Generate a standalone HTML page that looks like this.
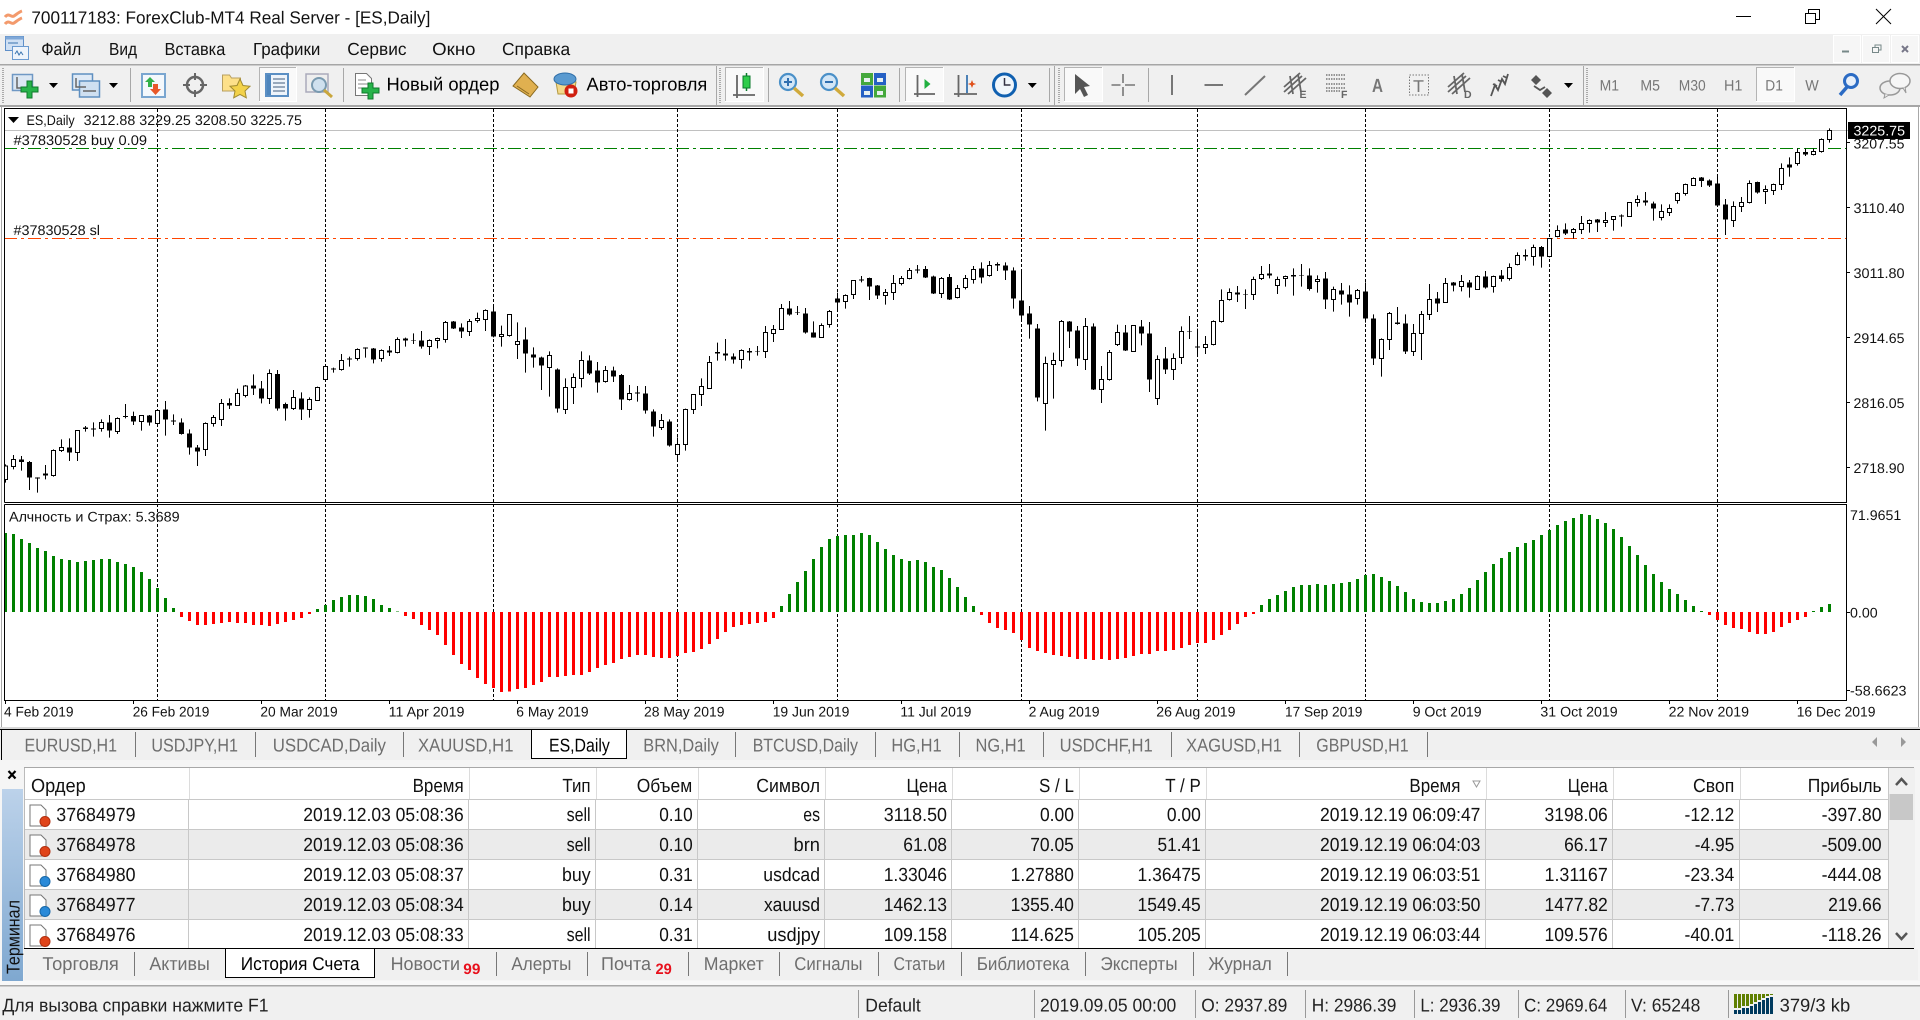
<!DOCTYPE html>
<html><head><meta charset="utf-8"><title>700117183: ForexClub-MT4 Real Server - [ES,Daily]</title>
<style>
html,body{margin:0;padding:0;background:#f0f0f0;width:1920px;height:1020px;overflow:hidden}
svg{display:block;shape-rendering:crispEdges}
text{font-family:"Liberation Sans","Noto Sans CJK SC",sans-serif;fill:#111;text-rendering:geometricPrecision}
.c{font-size:14px}
.r{font-size:19px}
.g{font-size:18.5px;fill:#6e6e6e}
.k{font-size:18.5px;fill:#000}
.m{font-size:17.5px}
.tf{font-size:15px;fill:#777}
.i{shape-rendering:auto}
.w{fill:none;stroke:#000;stroke-width:1}
.bk{fill:none;stroke:#000;stroke-width:5}
.wh{fill:#fff;stroke:#000;stroke-width:1;vector-effect:non-scaling-stroke}
.hg{fill:none;stroke:#008000;stroke-width:3}
.hr{fill:none;stroke:#f00;stroke-width:3}
</style></head><body>
<svg xmlns="http://www.w3.org/2000/svg" width="1920" height="1020" viewBox="0 0 1920 1020">
<defs><linearGradient id="bl" x1="0" y1="0" x2="0" y2="1"><stop offset="0" stop-color="#bcd2ea"/><stop offset="1" stop-color="#7fa8d0"/></linearGradient></defs>
<rect width="1920" height="1020" fill="#f0f0f0"/>
<!-- title bar -->
<rect width="1920" height="34" fill="#fff"/>
<g class="i" fill="none" stroke="#f39a6c" stroke-width="3"><path d="M5 17c4-5 6 1 9-1s5-4 8-5"/><path d="M5 24c4-5 6 1 9-1s5-4 8-5"/></g>
<text x="31.4" y="23.3" class="m" textLength="399" lengthAdjust="spacingAndGlyphs">700117183: ForexClub-MT4 Real Server - [ES,Daily]</text>
<path d="M1736 16.5h15" stroke="#000" fill="none"/>
<g fill="none" stroke="#000"><rect x="1805.5" y="13.5" width="10" height="10"/><path d="M1808.5 13.5v-4h11v10h-4"/></g>
<path class="i" d="M1876 9l15 15M1891 9l-15 15" stroke="#000" fill="none"/>
<!-- menu -->
<g class="i"><rect x="5.5" y="36.5" width="18" height="14" fill="#cfe0f4" stroke="#5f8fc8"/><rect x="5.5" y="36.5" width="18" height="3" fill="#7fa8d8"/><rect x="12.5" y="46.5" width="16" height="13" fill="#eef4fb" stroke="#6a9ad0"/><path d="M15 54l2-3 2 4 2-3 2 3" stroke="#3a75b0" fill="none"/><path d="M8 43h10" stroke="#3a75b0"/></g>
<text x="41.2" y="55" class="m" textLength="40" lengthAdjust="spacingAndGlyphs">Файл</text>
<text x="109" y="55" class="m" textLength="28" lengthAdjust="spacingAndGlyphs">Вид</text>
<text x="164.5" y="55" class="m" textLength="60.8" lengthAdjust="spacingAndGlyphs">Вставка</text>
<text x="253" y="55" class="m" textLength="67.4" lengthAdjust="spacingAndGlyphs">Графики</text>
<text x="347.3" y="55" class="m" textLength="59.2" lengthAdjust="spacingAndGlyphs">Сервис</text>
<text x="432.2" y="55" class="m" textLength="43.3" lengthAdjust="spacingAndGlyphs">Окно</text>
<text x="502" y="55" class="m" textLength="68.2" lengthAdjust="spacingAndGlyphs">Справка</text>
<g fill="#f6f6f6" stroke="#fff"><rect x="1833.5" y="35.5" width="27" height="27"/><rect x="1862.5" y="35.5" width="27" height="27"/><rect x="1891.5" y="35.5" width="27" height="27"/></g>
<path d="M1842 51.5h7" stroke="#788" stroke-width="2" fill="none"/>
<g fill="none" stroke="#788"><rect x="1872.5" y="47.5" width="6" height="5"/><path d="M1875 47v-2h6v5h-2"/></g>
<path class="i" d="M1902 46l6 6M1908 46l-6 6" stroke="#778" stroke-width="2" fill="none"/>
<rect y="64" width="1920" height="1.5" fill="#a6a6a6"/>
<!-- toolbar -->
<rect y="105" width="1920" height="2" fill="#a6a6a6"/>
<g fill="none" stroke="#aaa" stroke-width="2" stroke-dasharray="1 1"><path d="M3 68V103M720 68V103M1059 68V103M1587 68V103"/></g>
<path d="M130.5 68V102M343.5 68V102M768.5 68V102M899.5 68V102M1049.5 68V102M1148.5 68V102M716.5 66V105M1054.5 66V105M1583.5 66V105" stroke="#a8a8a8" fill="none"/>
<g fill="#f9f9f9" stroke="#fff"><rect x="259.5" y="67.5" width="37" height="34"/><rect x="725.5" y="67.5" width="38" height="34"/><rect x="905.5" y="67.5" width="38" height="34"/><rect x="1064.5" y="67.5" width="38" height="34"/><rect x="1756.5" y="67.5" width="38" height="34"/></g>
<path d="M259.5 101V67.5H296M725.5 101V67.5H763M905.5 101V67.5H943M1064.5 101V67.5H1102M1756.5 101V67.5H1794" stroke="#b4b4b4" fill="none"/>
<g class="i">
<!-- new chart -->
<rect x="12.5" y="74.5" width="20" height="16" fill="#dbe7f3" stroke="#6f98c4" stroke-width="1.5"/><path d="M17 77v11h11" stroke="#666" stroke-width="1.5" fill="none"/>
<path d="M27 81h5v6h6v5h-6v6h-5v-6h-6v-5h6z" fill="#27b34a" stroke="#0f7a2c"/>
<path d="M49 83h9l-4.5 5zM109 83h9l-4.5 5zM1027.8 83h9l-4.5 5zM1564 83h9l-4.5 5z" fill="#000"/>
<!-- profiles -->
<rect x="72.5" y="74" width="20" height="16" fill="#dfeaf6" stroke="#5f8fc0" stroke-width="1.5"/><rect x="79.5" y="81" width="20" height="16" fill="#cfe0f1" stroke="#5f8fc0" stroke-width="1.5"/><path d="M76 78v9h10M83 91h13" stroke="#666" stroke-width="1.5" fill="none"/>
<!-- market watch -->
<rect x="142" y="74" width="23" height="23" fill="#f4f8fc" stroke="#7aa6d0" stroke-width="2"/><path d="M145 82l5-5 5 5h-3v5h-4v-5z" fill="#33b04a"/><path d="M150 89h3v-5h5v5h3l-5.5 6z" fill="#e8582a"/>
<!-- crosshair -->
<circle cx="195" cy="85" r="8" fill="none" stroke="#666" stroke-width="2.5"/><path d="M195 73v7M195 90v7M183 85h7M200 85h7" stroke="#666" stroke-width="2" fill="none"/>
<!-- favourites -->
<path d="M222.5 75h7l2 3h9v13h-18z" fill="#fde08a" stroke="#b9a060"/><path d="M240 79l3 6.5 7 .8-5 4.7 1.3 6.8-6.300-3.400-6.300 3.400 1.300-6.800-5-4.700 7-.8z" fill="#f3d24a" stroke="#a08a30"/>
<!-- navigator -->
<rect x="266" y="74" width="22" height="22" fill="#eef4fb" stroke="#5b8fc4" stroke-width="2"/><rect x="267" y="75" width="4" height="20" fill="#4f86bd"/><path d="M273 79h12M273 83h12M273 87h12M273 91h12" stroke="#7a8ea8" stroke-width="1.5" fill="none"/>
<!-- data window -->
<rect x="306" y="74" width="22" height="18" fill="#eee" stroke="#aab" stroke-width="1.5"/><circle cx="319" cy="85" r="7" fill="#cfe0ee" stroke="#7a9ab0" stroke-width="2"/><path d="M324 90l8 7" stroke="#c9a63c" stroke-width="3"/>
<!-- new order -->
<path d="M355.5 73.5h11l5 5v17h-16z" fill="#fff" stroke="#777"/><path d="M358 80h8M358 84h10M358 88h5" stroke="#888" fill="none"/><path d="M368 83h5v5h6v5h-6v6h-5v-6h-6v-5h6z" fill="#27b34a" stroke="#0f7a2c"/>
<!-- metaeditor -->
<path d="M524 73l14 14-8 10-17-11z" fill="#e0b050" stroke="#8a6a20"/><path d="M517 86l12 8" stroke="#8a6a20" fill="none"/>
<!-- autotrading -->
<path d="M556 82h20l-2 12h-16z" fill="#f3d98a" stroke="#b59a40"/><ellipse cx="565" cy="79" rx="11" ry="6" fill="#5a9ad0" stroke="#2f6ea8"/><circle cx="571" cy="91" r="6.5" fill="#d02010"/><rect x="568.5" y="88.500" width="5" height="5" fill="#fff"/>
<!-- candles icon -->
<path d="M737 75v23M733 95h22" stroke="#666" stroke-width="1.8" fill="none"/><path d="M746.5 73v18" stroke="#0a7a2c" stroke-width="1.5"/><rect x="743" y="76" width="7" height="12" fill="#2ecc4a" stroke="#0a7a2c"/>
<!-- zoom -->
<circle cx="788" cy="82" r="8" fill="#d3e6f6" stroke="#4a90c8" stroke-width="2.2"/><path d="M784 82h8M788 78v8" stroke="#2f6fb0" stroke-width="2"/><path d="M794 88l9 8" stroke="#d0aa3c" stroke-width="3.5"/>
<circle cx="829" cy="82" r="8" fill="#d3e6f6" stroke="#4a90c8" stroke-width="2.2"/><path d="M825 82h8" stroke="#2f6fb0" stroke-width="2"/><path d="M835 88l9 8" stroke="#d0aa3c" stroke-width="3.5"/>
<!-- tile -->
<rect x="861" y="73" width="12" height="12" fill="#45a83c"/><rect x="874" y="73" width="12" height="12" fill="#2560c4"/><rect x="861" y="85.5" width="12" height="12" fill="#2560c4"/><rect x="874" y="85.5" width="12" height="12" fill="#45a83c"/><path d="M864 78h6v4h-6zM877 78h6v4h-6zM864 91h6v4h-6zM877 91h6v4h-6z" fill="#e8f0f0"/>
<!-- shift -->
<path d="M917.5 75v22M914 94h21" stroke="#666" stroke-width="1.8" fill="none"/><path d="M924.5 79l6 5-6 5z" fill="#22b040"/>
<path d="M958.5 75v22M954 94h23" stroke="#666" stroke-width="1.8" fill="none"/><path d="M967 75v18" stroke="#3a75b0" stroke-width="1.8"/><path d="M972 80l1.2 3 3 1-3 1-1.2 3-1.2-3-3-1 3-1z" fill="#e0501a"/>
<!-- clock -->
<circle cx="1004.5" cy="85" r="11" fill="#f0f6fb" stroke="#1060b0" stroke-width="3"/><path d="M1004.5 78v7h6" stroke="#334" stroke-width="1.5" fill="none"/>
<!-- drawing -->
<path d="M1075 74v20l5-5 4 8 4-2-4-8 6-1z" fill="#555"/>
<path d="M1123 74v9M1123 87v9M1111.5 85h9M1125 85h10" stroke="#777" stroke-width="1.6" fill="none"/>
<path d="M1172 75v20M1204.5 85H1223M1245 95l20-19" stroke="#777" stroke-width="2" fill="none"/>
<path d="M1284 92l18-16M1284 87l16-14M1288 94l18-16M1290 76l3 18M1298 74l3 18" stroke="#666" stroke-width="1.8" fill="none"/>
<path d="M1326 75h20M1326 79h20M1326 84h20M1326 88h20M1326 91h14" stroke="#777" stroke-width="1.6" stroke-dasharray="1.5 1" fill="none"/>
<rect x="1409.5" y="75" width="19" height="20" fill="none" stroke="#777" stroke-dasharray="1.5 1.5"/>
<path d="M1448 92l18-16M1448 87l16-14M1452 94l18-16M1454 76l3 18M1462 74l3 18" stroke="#666" stroke-width="1.8" fill="none"/>
<path d="M1491 96l4-11 3 5 4-11 3 5 3-10M1493 84l4 2M1498 80l4 2M1503 76l4 2" stroke="#555" stroke-width="1.8" fill="none"/>
<path d="M1536 75l5 5-5 5-5-5zM1547 88l5 5-5 5-5-5z" fill="#555"/><path d="M1534 86l6 4 5-3" stroke="#555" stroke-width="1.8" fill="none"/>
<!-- search / chat -->
<circle cx="1851" cy="81" r="6.5" fill="#e8f0fa" stroke="#2b6bc4" stroke-width="3"/><path d="M1847 87l-7 8" stroke="#2b6bc4" stroke-width="3.5"/>
<ellipse cx="1890" cy="88" rx="10" ry="7" fill="#eee" stroke="#999" stroke-width="1.5"/><path d="M1885 94l-1 4 5-3" fill="#eee" stroke="#999"/><ellipse cx="1900" cy="81" rx="10" ry="7.5" fill="#f6f6f6" stroke="#999" stroke-width="1.5"/><path d="M1903 88l3 5-1-6" fill="#f6f6f6" stroke="#999"/>
</g>
<text x="386.5" y="90.7" class="k" textLength="113" lengthAdjust="spacingAndGlyphs">Новый ордер</text>
<text x="586.5" y="90.7" class="k" textLength="120.8" lengthAdjust="spacingAndGlyphs">Авто-торговля</text>
<text x="1299.5" y="98" style="font-size:10.5px;font-weight:bold;fill:#666">E</text>
<text x="1341" y="98" style="font-size:10.5px;font-weight:bold;fill:#666">F</text>
<text x="1464" y="98" style="font-size:10.5px;font-weight:bold;fill:#666">D</text>
<text x="1372" y="92" style="font-size:19px;font-weight:bold;fill:#777" textLength="11" lengthAdjust="spacingAndGlyphs">A</text>
<text x="1413" y="92" style="font-size:17px;fill:#777" textLength="11" lengthAdjust="spacingAndGlyphs">T</text>
<text x="1599.6" y="90.7" class="tf" textLength="19.4" lengthAdjust="spacingAndGlyphs">M1</text>
<text x="1640.4" y="90.7" class="tf" textLength="19.6" lengthAdjust="spacingAndGlyphs">M5</text>
<text x="1678.8" y="90.7" class="tf" textLength="26.9" lengthAdjust="spacingAndGlyphs">M30</text>
<text x="1724" y="90.7" class="tf" textLength="18.4" lengthAdjust="spacingAndGlyphs">H1</text>
<text x="1765.3" y="90.7" class="tf" textLength="17.6" lengthAdjust="spacingAndGlyphs">D1</text>
<text x="1805.3" y="90.7" class="tf" textLength="13.5" lengthAdjust="spacingAndGlyphs">W</text>
<!-- chart area -->
<rect y="107" width="1920" height="620" fill="#fff"/>
<path d="M1.5 107V727M1918.5 107V727" stroke="#a8a8a8" fill="none"/>
<path d="M4 130.5H1848" stroke="#c0c0c0" fill="none"/>
<g fill="none" stroke="#000" stroke-dasharray="3 2"><path d="M157.5 109V700M325.5 109V700M493.5 109V700M677.5 109V700M837.5 109V700M1021.5 109V700M1197.5 109V700M1365.5 109V700M1549.5 109V700M1717.5 109V700"/></g>
<path d="M4 148.5H1847" stroke="#008000" stroke-dasharray="13 4 3 4" fill="none"/>
<path d="M4 238.5H1847" stroke="#ff4500" stroke-dasharray="13 4 3 4" fill="none"/>
<!-- panel A -->
<g transform="translate(0 100) scale(1 .33333)">
<path class="w" d="M5.5 1093V1148M13.5 1065V1108M21.5 1068V1112M29.5 1083V1170M37.5 1132V1178M45.5 1095V1138M53.5 1048V1130M61.5 1018V1056M69.5 1015V1083M77.5 990V1083M85.5 978V995M93.5 967V1010M101.5 958V995M109.5 945V1013M117.5 952V1002M125.5 912V955M133.5 935V975M141.5 945V992M149.5 945V977M157.5 928V975M165.5 903V1007M173.5 943V975M181.5 955V1004M189.5 988V1064M197.5 1035V1098M205.5 967V1068M213.5 945V980M221.5 897V978M229.5 895V927M237.5 866V918M245.5 855V892M253.5 823V885M261.5 843V910M269.5 808V912M277.5 810V932M285.5 908V962M293.5 870V930M301.5 877V960M309.5 892V953M317.5 860V902M325.5 798V840M333.5 803V818M341.5 762V812M349.5 770V800M357.5 745V782M365.5 742V773M373.5 744V790M381.5 748V785M389.5 738V768M397.5 712V760M405.5 713V740M413.5 700V732M421.5 693V746M429.5 718V765M437.5 713V745M445.5 663V728M453.5 663V687M461.5 670V714M469.5 657V708M477.5 638V668M485.5 628V693M493.5 620V712M501.5 677V740M509.5 642V710M517.5 667V777M525.5 682V818M533.5 742V803M541.5 770V870M549.5 754V890M557.5 805V938M565.5 835V942M573.5 820V912M581.5 754V862M589.5 766V825M597.5 786V878M605.5 798V848M613.5 800V846M621.5 822V930M629.5 855V902M637.5 858V905"/>
<path class="bk" d="M21.5 1078V1086M29.5 1086V1133M37.5 1132V1136M45.5 1120V1127M69.5 1042V1058M85.5 983V987M93.5 985V989M109.5 967V992M125.5 948V951M133.5 948V965M149.5 946V968M165.5 928V958M173.5 961V965M181.5 967V1002M189.5 1000V1043M197.5 1042V1055M229.5 909V917M253.5 856V866M261.5 865V895M277.5 822V926M285.5 912V926M301.5 895V929M333.5 805V809M349.5 775V779M365.5 743V746M373.5 745V779M389.5 751V758M405.5 715V722M413.5 720V722M421.5 721V740M453.5 664V686M461.5 683V695M493.5 634V710M525.5 718V761M533.5 763V773M541.5 772V797M557.5 808V926M589.5 781V821M597.5 811V848M613.5 811V829M621.5 825V899M637.5 877V881"/>
<path class="wh" d="M3.5 1098h4V1138h-4zM11.5 1078h4V1100h-4zM51.5 1052h4V1127h-4zM59.5 1042h4V1052h-4zM75.5 992h4V1057h-4zM99.5 968h4V985h-4zM115.5 955h4V995h-4zM139.5 947h4V965h-4zM155.5 932h4V970h-4zM203.5 970h4V1048h-4zM211.5 952h4V970h-4zM219.5 910h4V958h-4zM235.5 880h4V916h-4zM243.5 858h4V887h-4zM267.5 820h4V895h-4zM291.5 892h4V925h-4zM307.5 898h4V928h-4zM315.5 862h4V901h-4zM323.5 800h4V838h-4zM339.5 782h4V808h-4zM355.5 748h4V775h-4zM379.5 752h4V775h-4zM395.5 719h4V757h-4zM427.5 722h4V739h-4zM435.5 716h4V721h-4zM443.5 667h4V718h-4zM467.5 665h4V695h-4zM475.5 656h4V661h-4zM483.5 631h4V658h-4zM499.5 704h4V709h-4zM507.5 644h4V707h-4zM515.5 725h4V733h-4zM547.5 767h4V802h-4zM563.5 862h4V928h-4zM571.5 833h4V862h-4zM579.5 782h4V835h-4zM603.5 811h4V845h-4zM627.5 880h4V899h-4z"/>
</g>
<!-- panel B -->
<g transform="translate(640 240) scale(1 .33333)">
<path class="w" d="M5.5 438V521M13.5 508V590M21.5 522V570M29.5 538V620M37.5 592V660M45.5 506V632M53.5 462V522M61.5 415V498M69.5 348V447M77.5 308V362M85.5 297V362M93.5 340V371M101.5 328V386M109.5 324V362M117.5 318V347M125.5 258V354M133.5 255V306M141.5 192V270M149.5 183V227M157.5 198V225M165.5 204V281M173.5 244V293M181.5 250V293M189.5 210V263M197.5 158V213M205.5 163V206M213.5 120V177M221.5 108V127M229.5 113V180M237.5 135V177M245.5 147V194M253.5 105V180M261.5 108V136M269.5 84V118M277.5 75V100M285.5 78V114M293.5 107V162M301.5 111V174M309.5 102V180M317.5 135V175M325.5 105V148M333.5 78V131M341.5 67V130M349.5 63V110M357.5 67V93M365.5 67V120M373.5 82V206M381.5 91V242M389.5 198V296M397.5 252V484M405.5 350V572M413.5 338V476M421.5 240V380M429.5 243V324M437.5 258V378M445.5 234V390M453.5 250V450M461.5 378V489M469.5 330V422M477.5 254V318M485.5 255V333M493.5 256V335M501.5 240V316M509.5 246V456M517.5 346V495M525.5 321V402M533.5 340V420M541.5 259V372M549.5 228V297M557.5 266V351M565.5 288V342M573.5 241V316M581.5 148V248M589.5 145V182M597.5 138V186M605.5 148V207M613.5 110V180M621.5 78V120M629.5 72V115M637.5 110V162"/>
<path class="bk" d="M5.5 460V512M13.5 514V560M29.5 544V617M77.5 336V341M85.5 340V347M93.5 349V359M109.5 333V338M117.5 334V336M149.5 205V224M157.5 217V219M165.5 220V278M173.5 277V293M197.5 175V188M221.5 118V122M229.5 114V140M237.5 136V167M277.5 88V92M285.5 87V113M293.5 109V161M309.5 111V179M341.5 85V113M357.5 72V77M365.5 76V92M373.5 91V176M381.5 181V227M389.5 220V254M397.5 265V473M429.5 244V275M437.5 271V356M453.5 259V449M485.5 277V332M501.5 259V281M509.5 280V419M525.5 355V389M549.5 273V275M557.5 319V323M597.5 157V164M605.5 162V164M629.5 100V107"/>
<path class="wh" d="M19.5 541h4V563h-4zM35.5 613h4V643h-4zM43.5 508h4V613h-4zM51.5 463h4V508h-4zM59.5 439h4V464h-4zM67.5 367h4V445h-4zM99.5 331h4V358h-4zM123.5 277h4V334h-4zM131.5 268h4V280h-4zM139.5 205h4V268h-4zM179.5 256h4V292h-4zM187.5 214h4V253h-4zM203.5 166h4V184h-4zM211.5 121h4V163h-4zM243.5 157h4V166h-4zM251.5 130h4V157h-4zM259.5 115h4V130h-4zM267.5 91h4V115h-4zM299.5 115h4V160h-4zM315.5 146h4V172h-4zM323.5 115h4V142h-4zM331.5 88h4V118h-4zM347.5 77h4V106h-4zM403.5 371h4V490h-4zM411.5 362h4V373h-4zM419.5 244h4V361h-4zM443.5 259h4V358h-4zM459.5 418h4V448h-4zM467.5 337h4V418h-4zM475.5 278h4V313h-4zM491.5 257h4V334h-4zM515.5 358h4V475h-4zM531.5 356h4V388h-4zM539.5 275h4V352h-4zM563.5 314h4V322h-4zM571.5 244h4V314h-4zM579.5 181h4V245h-4zM587.5 157h4V179h-4zM611.5 118h4V163h-4zM619.5 103h4V116h-4zM635.5 119h4V136h-4z"/>
</g>
<!-- panel C -->
<g transform="translate(1280 100) scale(1 .33333)">
<path class="w" d="M5.5 527V560M13.5 505V587M21.5 492V560M29.5 505V572M37.5 526V578M45.5 516V627M53.5 560V635M61.5 549V614M69.5 556V650M77.5 567V614M85.5 547V668M93.5 643V795M101.5 715V830M109.5 636V750M117.5 621V674M125.5 643V762M133.5 672V768M141.5 633V780M149.5 552V660M157.5 576V636M165.5 534V608M173.5 546V574M181.5 525V574M189.5 540V593M197.5 526V570M205.5 513V566M213.5 527V578M221.5 510V545M229.5 490V542M237.5 457V496M245.5 448V482M253.5 434V497M261.5 438V503M269.5 414V472M277.5 376V412M285.5 370V405M293.5 384V416M301.5 348V402M309.5 358V398M317.5 357V396M325.5 336V381M333.5 348V392M341.5 343V380M349.5 306V350M357.5 286V320M365.5 276V317M373.5 305V362M381.5 313V361M389.5 313V348M397.5 277V311M405.5 251V287M413.5 232V258M421.5 231V261M429.5 238V261M437.5 223V319M445.5 297V405M453.5 304V381M461.5 291V336M469.5 241V310M477.5 245V281M485.5 256V312M493.5 251V285M501.5 190V270M509.5 172V230M517.5 145V197M525.5 145V168M533.5 145V166M541.5 115V158M549.5 85V128"/>
<path class="bk" d="M13.5 525V530M21.5 525V527M29.5 526V567M45.5 535V599M61.5 571V584M69.5 583V608M85.5 574V656M93.5 655V776M117.5 667V672M125.5 670V755M157.5 595V611M173.5 547V557M189.5 547V563M205.5 529V562M221.5 526V537M245.5 465V470M261.5 441V470M285.5 388V401M317.5 358V368M341.5 346V349M365.5 301V307M373.5 310V326M421.5 233V243M429.5 241V257M437.5 250V317M445.5 313V359M477.5 246V278M509.5 193V203M525.5 156V164"/>
<path class="wh" d="M3.5 530h4V536h-4zM35.5 538h4V544h-4zM51.5 568h4V598h-4zM75.5 571h4V595h-4zM99.5 718h4V775h-4zM107.5 640h4V718h-4zM131.5 701h4V755h-4zM139.5 643h4V700h-4zM147.5 598h4V643h-4zM163.5 550h4V607h-4zM179.5 545h4V559h-4zM195.5 529h4V568h-4zM211.5 530h4V559h-4zM227.5 503h4V536h-4zM235.5 467h4V493h-4zM251.5 442h4V470h-4zM267.5 416h4V470h-4zM275.5 391h4V409h-4zM291.5 389h4V397h-4zM299.5 371h4V388h-4zM307.5 362h4V370h-4zM323.5 361h4V368h-4zM331.5 350h4V358h-4zM347.5 308h4V349h-4zM355.5 299h4V307h-4zM387.5 326h4V338h-4zM379.5 335h4V353h-4zM395.5 281h4V301h-4zM403.5 254h4V280h-4zM411.5 235h4V256h-4zM451.5 320h4V361h-4zM459.5 308h4V320h-4zM467.5 251h4V308h-4zM483.5 268h4V274h-4zM491.5 254h4V271h-4zM499.5 205h4V254h-4zM515.5 158h4V190h-4zM531.5 155h4V164h-4zM539.5 118h4V155h-4zM547.5 91h4V118h-4z"/>
</g>
<!-- histograms -->
<g transform="translate(0 500) scale(1 .33333)">
<path class="hg" d="M5.5 336V99M13.5 336V102M21.5 336V117M29.5 336V129M37.5 336V144M45.5 336V153M53.5 336V168M61.5 336V177M69.5 336V180M77.5 336V186M85.5 336V183M93.5 336V180M101.5 336V177M109.5 336V177M117.5 336V186M125.5 336V192M133.5 336V201M141.5 336V216M149.5 336V237M157.5 336V264M165.5 336V294M173.5 336V324M317.5 336V327M325.5 336V315M333.5 336V300M341.5 336V291M349.5 336V285M357.5 336V285M365.5 336V288M373.5 336V297M381.5 336V315M389.5 336V324M397.5 336V334"/>
<path class="hr" d="M181.5 336V351M189.5 336V363M197.5 336V375M205.5 336V375M213.5 336V372M221.5 336V369M229.5 336V366M237.5 336V369M245.5 336V369M253.5 336V375M261.5 336V375M269.5 336V378M277.5 336V372M285.5 336V366M293.5 336V360M301.5 336V354M309.5 336V342M405.5 336V348M413.5 336V357M421.5 336V375M429.5 336V390M437.5 336V405M445.5 336V435M453.5 336V465M461.5 336V492M469.5 336V510M477.5 336V534M485.5 336V552M493.5 336V564M501.5 336V576M509.5 336V574M517.5 336V567M525.5 336V564M533.5 336V555M541.5 336V546M549.5 336V531M557.5 336V531M565.5 336V528M573.5 336V525M581.5 336V525M589.5 336V516M597.5 336V504M605.5 336V495M613.5 336V489M621.5 336V477M629.5 336V471M637.5 336V465"/>
</g>
<g transform="translate(640 500) scale(1 .33333)">
<path class="hr" d="M5.5 336V465M13.5 336V471M21.5 336V474M29.5 336V474M37.5 336V468M45.5 336V459M53.5 336V456M61.5 336V447M69.5 336V432M77.5 336V417M85.5 336V396M93.5 336V381M101.5 336V375M109.5 336V372M117.5 336V369M125.5 336V366M133.5 336V354M341.5 336V345M349.5 336V369M357.5 336V384M365.5 336V390M373.5 336V399M381.5 336V420M389.5 336V444M397.5 336V453M405.5 336V459M413.5 336V465M421.5 336V468M429.5 336V471M437.5 336V477M445.5 336V477M453.5 336V480M461.5 336V477M469.5 336V480M477.5 336V477M485.5 336V474M493.5 336V468M501.5 336V462M509.5 336V462M517.5 336V453M525.5 336V453M533.5 336V450M541.5 336V444M549.5 336V435M557.5 336V429M565.5 336V429M573.5 336V420M581.5 336V405M589.5 336V390M597.5 336V372M605.5 336V351M613.5 336V342"/>
<path class="hg" d="M141.5 336V318M149.5 336V282M157.5 336V246M165.5 336V213M173.5 336V177M181.5 336V141M189.5 336V117M197.5 336V108M205.5 336V105M213.5 336V105M221.5 336V99M229.5 336V105M237.5 336V126M245.5 336V147M253.5 336V165M261.5 336V177M269.5 336V183M277.5 336V180M285.5 336V186M293.5 336V201M301.5 336V210M309.5 336V234M317.5 336V261M325.5 336V291M333.5 336V318M621.5 336V315M629.5 336V297M637.5 336V285"/>
</g>
<g transform="translate(1280 500) scale(1 .33333)">
<path class="hg" d="M5.5 336V273M13.5 336V261M21.5 336V255M29.5 336V255M37.5 336V252M45.5 336V255M53.5 336V252M61.5 336V249M69.5 336V246M77.5 336V237M85.5 336V225M93.5 336V222M101.5 336V231M109.5 336V243M117.5 336V258M125.5 336V276M133.5 336V297M141.5 336V306M149.5 336V309M157.5 336V309M165.5 336V303M173.5 336V297M181.5 336V282M189.5 336V264M197.5 336V240M205.5 336V216M213.5 336V192M221.5 336V174M229.5 336V156M237.5 336V141M245.5 336V129M253.5 336V120M261.5 336V105M269.5 336V90M277.5 336V75M285.5 336V63M293.5 336V54M301.5 336V42M309.5 336V45M317.5 336V57M325.5 336V69M333.5 336V87M341.5 336V111M349.5 336V138M357.5 336V165M365.5 336V195M373.5 336V222M381.5 336V246M389.5 336V267M397.5 336V282M405.5 336V300M413.5 336V318M421.5 336V333M533.5 336V333M541.5 336V321M549.5 336V312"/>
<path class="hr" d="M429.5 336V345M437.5 336V360M445.5 336V375M453.5 336V384M461.5 336V387M469.5 336V396M477.5 336V402M485.5 336V402M493.5 336V396M501.5 336V381M509.5 336V369M517.5 336V360M525.5 336V351"/>
</g>
<!-- chart frames -->
<rect x="2" y="107" width="2" height="597" fill="#fff"/>
<g fill="none" stroke="#000">
<path d="M4.5 502.5V108.5H1846.5V502.5H4.5"/>
<path d="M4.5 504.5H1846.5V700.5H4.5V504.5"/>
<path d="M1847 142.5h3M1847 207.5h3M1847 272.5h3M1847 337.5h3M1847 402.5h3M1847 467.5h3M1847 612.5h3M1847 690.5h3"/>
<path d="M5.5 701v3M133.5 701v3M261.5 701v3M389.5 701v3M517.5 701v3M645.5 701v3M773.5 701v3M901.5 701v3M1029.5 701v3M1157.5 701v3M1285.5 701v3M1413.5 701v3M1541.5 701v3M1669.5 701v3M1797.5 701v3"/>
</g>
<path d="M8 117h11l-5.5 6z" fill="#000" class="i"/>
<text x="26.5" y="125" class="c" textLength="48.2" lengthAdjust="spacingAndGlyphs">ES,Daily</text>
<text x="83.7" y="125" class="c" textLength="218.3" lengthAdjust="spacingAndGlyphs">3212.88 3229.25 3208.50 3225.75</text>
<text x="13.5" y="145" class="c" textLength="133.5" lengthAdjust="spacingAndGlyphs">#37830528 buy 0.09</text>
<text x="13.5" y="235" class="c" textLength="86.5" lengthAdjust="spacingAndGlyphs">#37830528 sl</text>
<text x="9" y="521.7" class="c" textLength="170.6" lengthAdjust="spacingAndGlyphs">Алчность и Страх: 5.3689</text>
<text x="1853.5" y="148.3" class="c" textLength="51" lengthAdjust="spacingAndGlyphs">3207.55</text>
<rect x="1848" y="122" width="62" height="17" fill="#000"/>
<text x="1853.5" y="135.3" class="c" style="fill:#fff" textLength="51.5" lengthAdjust="spacingAndGlyphs">3225.75</text>
<text x="1853.5" y="213" class="c" textLength="51" lengthAdjust="spacingAndGlyphs">3110.40</text>
<text x="1853.5" y="278" class="c" textLength="51" lengthAdjust="spacingAndGlyphs">3011.80</text>
<text x="1853.5" y="343" class="c" textLength="51" lengthAdjust="spacingAndGlyphs">2914.65</text>
<text x="1853.5" y="408" class="c" textLength="51" lengthAdjust="spacingAndGlyphs">2816.05</text>
<text x="1853.5" y="473" class="c" textLength="51" lengthAdjust="spacingAndGlyphs">2718.90</text>
<text x="1850" y="520" class="c" textLength="51.2" lengthAdjust="spacingAndGlyphs">71.9651</text>
<text x="1850" y="617.3" class="c" textLength="27.6" lengthAdjust="spacingAndGlyphs">0.00</text>
<text x="1850" y="695.7" class="c" textLength="56.5" lengthAdjust="spacingAndGlyphs">-58.6623</text>
<text x="4" y="716.7" class="c" textLength="69.5" lengthAdjust="spacingAndGlyphs">4 Feb 2019</text>
<text x="132.7" y="716.7" class="c" textLength="76.7" lengthAdjust="spacingAndGlyphs">26 Feb 2019</text>
<text x="260.4" y="716.7" class="c" textLength="77.2" lengthAdjust="spacingAndGlyphs">20 Mar 2019</text>
<text x="388.6" y="716.7" class="c" textLength="75.9" lengthAdjust="spacingAndGlyphs">11 Apr 2019</text>
<text x="516.3" y="716.7" class="c" textLength="72.3" lengthAdjust="spacingAndGlyphs">6 May 2019</text>
<text x="644" y="716.7" class="c" textLength="80.5" lengthAdjust="spacingAndGlyphs">28 May 2019</text>
<text x="772.7" y="716.7" class="c" textLength="76.7" lengthAdjust="spacingAndGlyphs">19 Jun 2019</text>
<text x="900.4" y="716.7" class="c" textLength="71" lengthAdjust="spacingAndGlyphs">11 Jul 2019</text>
<text x="1028.6" y="716.7" class="c" textLength="71" lengthAdjust="spacingAndGlyphs">2 Aug 2019</text>
<text x="1156.3" y="716.7" class="c" textLength="79.2" lengthAdjust="spacingAndGlyphs">26 Aug 2019</text>
<text x="1285" y="716.7" class="c" textLength="77.4" lengthAdjust="spacingAndGlyphs">17 Sep 2019</text>
<text x="1412.7" y="716.7" class="c" textLength="68.9" lengthAdjust="spacingAndGlyphs">9 Oct 2019</text>
<text x="1540.4" y="716.7" class="c" textLength="77.2" lengthAdjust="spacingAndGlyphs">31 Oct 2019</text>
<text x="1668.6" y="716.7" class="c" textLength="80.4" lengthAdjust="spacingAndGlyphs">22 Nov 2019</text>
<text x="1796.7" y="716.7" class="c" textLength="78.8" lengthAdjust="spacingAndGlyphs">16 Dec 2019</text>
<rect y="727" width="1920" height="2" fill="#d8d8d8"/>
<!-- chart tabs -->
<rect y="729" width="1920" height="31" fill="#f0f0f0"/>
<path d="M0 729.5H1920M1.5 730V760" stroke="#000" fill="none"/>
<path d="M135.5 732V757M255.5 732V757M403.5 732V757M735.5 732V757M875.5 732V757M959.5 732V757M1043.5 732V757M1171.5 732V757M1299.5 732V757M1427.5 732V757" stroke="#777" fill="none"/>
<rect x="531.5" y="729.5" width="95" height="29" fill="#fff" stroke="#000"/>
<text x="24.5" y="751.7" class="g" textLength="92.5" lengthAdjust="spacingAndGlyphs">EURUSD,H1</text>
<text x="151.4" y="751.7" class="g" textLength="86.6" lengthAdjust="spacingAndGlyphs">USDJPY,H1</text>
<text x="272.7" y="751.7" class="g" textLength="113.3" lengthAdjust="spacingAndGlyphs">USDCAD,Daily</text>
<text x="418" y="751.7" class="g" textLength="95.5" lengthAdjust="spacingAndGlyphs">XAUUSD,H1</text>
<text x="549" y="751.7" class="k" textLength="60.8" lengthAdjust="spacingAndGlyphs">ES,Daily</text>
<text x="643.3" y="751.7" class="g" textLength="75.5" lengthAdjust="spacingAndGlyphs">BRN,Daily</text>
<text x="752.7" y="751.7" class="g" textLength="105.3" lengthAdjust="spacingAndGlyphs">BTCUSD,Daily</text>
<text x="891.4" y="751.7" class="g" textLength="50.2" lengthAdjust="spacingAndGlyphs">HG,H1</text>
<text x="975.5" y="751.7" class="g" textLength="50.2" lengthAdjust="spacingAndGlyphs">NG,H1</text>
<text x="1059.6" y="751.7" class="g" textLength="93.1" lengthAdjust="spacingAndGlyphs">USDCHF,H1</text>
<text x="1186" y="751.7" class="g" textLength="96" lengthAdjust="spacingAndGlyphs">XAGUSD,H1</text>
<text x="1316.3" y="751.7" class="g" textLength="92.3" lengthAdjust="spacingAndGlyphs">GBPUSD,H1</text>
<path class="i" d="M1877 737v10l-5-5zM1901 737v10l5-5z" fill="#999"/>
<!-- terminal -->
<rect y="760" width="1920" height="226" fill="#f5f5f5"/>
<rect x="25" y="768" width="1863" height="180" fill="#fff"/>
<rect x="25" y="829" width="1863" height="30" fill="#ebebeb"/>
<rect x="25" y="889" width="1863" height="30" fill="#ebebeb"/>
<rect x="1888" y="768" width="27" height="180" fill="#f0f0f0"/>
<rect x="2" y="789" width="21" height="192" fill="url(#bl)"/>
<path class="i" d="M8.5 771l7 7.5M15.5 771l-7 7.5" stroke="#000" stroke-width="2.2" fill="none"/>
<text transform="rotate(-90 19.5 974)" x="19.5" y="974" style="font-size:18.5px;fill:#111" textLength="74" lengthAdjust="spacingAndGlyphs">Терминал</text>
<path d="M24 767.5H1914" stroke="#a8a8a8" fill="none"/>
<path d="M24.5 768V948" stroke="#bbb" fill="none"/>
<path d="M25 799.5H1888M25 829.5H1888M25 859.5H1888M25 889.5H1888M25 919.5H1888" stroke="#c8c8c8" fill="none"/>
<path d="M189.5 768V799M469.5 768V799M596.5 768V799M698.5 768V799M825.5 768V799M952.5 768V799M1079.5 768V799M1206.5 768V799M1486.5 768V799M1613.5 768V799M1740.5 768V799" stroke="#dcdcdc" fill="none"/>
<path d="M188.5 800V948M468.5 800V948M595.5 800V948M697.5 800V948M824.5 800V948M951.5 800V948M1078.5 800V948M1205.5 800V948M1485.5 800V948M1612.5 800V948M1739.5 800V948M1888.5 768V948" stroke="#c8c8c8" fill="none"/>
<text x="31" y="792" class="r" textLength="54.7" lengthAdjust="spacingAndGlyphs">Ордер</text>
<text x="412.6" y="792" class="r" textLength="51.1" lengthAdjust="spacingAndGlyphs">Время</text>
<text x="562.4" y="792" class="r" textLength="28.2" lengthAdjust="spacingAndGlyphs">Тип</text>
<text x="636.7" y="792" class="r" textLength="55.5" lengthAdjust="spacingAndGlyphs">Объем</text>
<text x="756.3" y="792" class="r" textLength="63.7" lengthAdjust="spacingAndGlyphs">Символ</text>
<text x="906.5" y="792" class="r" textLength="40.5" lengthAdjust="spacingAndGlyphs">Цена</text>
<text x="1039" y="792" class="r" textLength="34.9" lengthAdjust="spacingAndGlyphs">S / L</text>
<text x="1165.3" y="792" class="r" textLength="35.5" lengthAdjust="spacingAndGlyphs">T / P</text>
<text x="1409.4" y="792" class="r" textLength="51" lengthAdjust="spacingAndGlyphs">Время</text>
<path class="i" d="M1473 781h7l-3.5 6z" fill="none" stroke="#999"/>
<text x="1567.8" y="792" class="r" textLength="40" lengthAdjust="spacingAndGlyphs">Цена</text>
<text x="1693" y="792" class="r" textLength="41.3" lengthAdjust="spacingAndGlyphs">Своп</text>
<text x="1807.8" y="792" class="r" textLength="73.8" lengthAdjust="spacingAndGlyphs">Прибыль</text>
<rect x="1889.5" y="794" width="23.5" height="26" fill="#c8c8c8"/>
<path class="i" d="M1896 785l5.5-6 5.500 6M1896 933l5.500 6 5.500-6" fill="none" stroke="#555" stroke-width="2.5"/>
<!-- row icons -->
<g class="i">
<g fill="#fff" stroke="#777"><path d="M30 805h11l5 5v16H30z"/><path d="M30 835h11l5 5v16H30z"/><path d="M30 865h11l5 5v16H30z"/><path d="M30 895h11l5 5v16H30z"/><path d="M30 925h11l5 5v16H30z"/></g>
<g fill="#e0441a" stroke="#b03010"><circle cx="45" cy="821.5" r="5"/><circle cx="45" cy="851.5" r="5"/><circle cx="45" cy="941.5" r="5"/></g>
<g fill="#2a8ad8" stroke="#1868a8"><circle cx="45" cy="881.5" r="5"/><circle cx="45" cy="911.5" r="5"/></g>
</g>
<!-- row 1 -->
<text x="56.3" y="821" class="r" textLength="79.2" lengthAdjust="spacingAndGlyphs">37684979</text>
<text x="303.3" y="821" class="r" textLength="160.4" lengthAdjust="spacingAndGlyphs">2019.12.03 05:08:36</text>
<text x="566.6" y="821" class="r" textLength="24" lengthAdjust="spacingAndGlyphs">sell</text>
<text x="659.2" y="821" class="r" textLength="33.5" lengthAdjust="spacingAndGlyphs">0.10</text>
<text x="803.3" y="821" class="r" textLength="16.7" lengthAdjust="spacingAndGlyphs">es</text>
<text x="883.7" y="821" class="r" textLength="63.3" lengthAdjust="spacingAndGlyphs">3118.50</text>
<text x="1040" y="821" class="r" textLength="33.9" lengthAdjust="spacingAndGlyphs">0.00</text>
<text x="1166.9" y="821" class="r" textLength="33.9" lengthAdjust="spacingAndGlyphs">0.00</text>
<text x="1320" y="821" class="r" textLength="160.4" lengthAdjust="spacingAndGlyphs">2019.12.19 06:09:47</text>
<text x="1544.5" y="821" class="r" textLength="63.3" lengthAdjust="spacingAndGlyphs">3198.06</text>
<text x="1684.5" y="821" class="r" textLength="49.8" lengthAdjust="spacingAndGlyphs">-12.12</text>
<text x="1821.6" y="821" class="r" textLength="60" lengthAdjust="spacingAndGlyphs">-397.80</text>
<!-- row 2 -->
<text x="56.3" y="851" class="r" textLength="79.2" lengthAdjust="spacingAndGlyphs">37684978</text>
<text x="303.3" y="851" class="r" textLength="160.4" lengthAdjust="spacingAndGlyphs">2019.12.03 05:08:36</text>
<text x="566.6" y="851" class="r" textLength="24" lengthAdjust="spacingAndGlyphs">sell</text>
<text x="659.2" y="851" class="r" textLength="33.5" lengthAdjust="spacingAndGlyphs">0.10</text>
<text x="793.5" y="851" class="r" textLength="26.5" lengthAdjust="spacingAndGlyphs">brn</text>
<text x="903.3" y="851" class="r" textLength="43.7" lengthAdjust="spacingAndGlyphs">61.08</text>
<text x="1030.2" y="851" class="r" textLength="43.7" lengthAdjust="spacingAndGlyphs">70.05</text>
<text x="1157.5" y="851" class="r" textLength="43.3" lengthAdjust="spacingAndGlyphs">51.41</text>
<text x="1320" y="851" class="r" textLength="160.4" lengthAdjust="spacingAndGlyphs">2019.12.19 06:04:03</text>
<text x="1564.1" y="851" class="r" textLength="43.7" lengthAdjust="spacingAndGlyphs">66.17</text>
<text x="1694.7" y="851" class="r" textLength="39.6" lengthAdjust="spacingAndGlyphs">-4.95</text>
<text x="1821.6" y="851" class="r" textLength="60" lengthAdjust="spacingAndGlyphs">-509.00</text>
<!-- row 3 -->
<text x="56.3" y="881" class="r" textLength="79.2" lengthAdjust="spacingAndGlyphs">37684980</text>
<text x="303.3" y="881" class="r" textLength="160.4" lengthAdjust="spacingAndGlyphs">2019.12.03 05:08:37</text>
<text x="562" y="881" class="r" textLength="28.6" lengthAdjust="spacingAndGlyphs">buy</text>
<text x="659.2" y="881" class="r" textLength="33.5" lengthAdjust="spacingAndGlyphs">0.31</text>
<text x="763.3" y="881" class="r" textLength="56.7" lengthAdjust="spacingAndGlyphs">usdcad</text>
<text x="883.7" y="881" class="r" textLength="63.3" lengthAdjust="spacingAndGlyphs">1.33046</text>
<text x="1010.6" y="881" class="r" textLength="63.3" lengthAdjust="spacingAndGlyphs">1.27880</text>
<text x="1137.5" y="881" class="r" textLength="63.3" lengthAdjust="spacingAndGlyphs">1.36475</text>
<text x="1320" y="881" class="r" textLength="160.4" lengthAdjust="spacingAndGlyphs">2019.12.19 06:03:51</text>
<text x="1544.5" y="881" class="r" textLength="63.3" lengthAdjust="spacingAndGlyphs">1.31167</text>
<text x="1684.5" y="881" class="r" textLength="49.8" lengthAdjust="spacingAndGlyphs">-23.34</text>
<text x="1821.6" y="881" class="r" textLength="60" lengthAdjust="spacingAndGlyphs">-444.08</text>
<!-- row 4 -->
<text x="56.3" y="911" class="r" textLength="79.2" lengthAdjust="spacingAndGlyphs">37684977</text>
<text x="303.3" y="911" class="r" textLength="160.4" lengthAdjust="spacingAndGlyphs">2019.12.03 05:08:34</text>
<text x="562" y="911" class="r" textLength="28.6" lengthAdjust="spacingAndGlyphs">buy</text>
<text x="659.2" y="911" class="r" textLength="33.5" lengthAdjust="spacingAndGlyphs">0.14</text>
<text x="764" y="911" class="r" textLength="56" lengthAdjust="spacingAndGlyphs">xauusd</text>
<text x="883.7" y="911" class="r" textLength="63.3" lengthAdjust="spacingAndGlyphs">1462.13</text>
<text x="1010.6" y="911" class="r" textLength="63.3" lengthAdjust="spacingAndGlyphs">1355.40</text>
<text x="1137.5" y="911" class="r" textLength="63.3" lengthAdjust="spacingAndGlyphs">1549.45</text>
<text x="1320" y="911" class="r" textLength="160.4" lengthAdjust="spacingAndGlyphs">2019.12.19 06:03:50</text>
<text x="1544.5" y="911" class="r" textLength="63.3" lengthAdjust="spacingAndGlyphs">1477.82</text>
<text x="1694.7" y="911" class="r" textLength="39.6" lengthAdjust="spacingAndGlyphs">-7.73</text>
<text x="1828.1" y="911" class="r" textLength="53.5" lengthAdjust="spacingAndGlyphs">219.66</text>
<!-- row 5 -->
<text x="56.3" y="941" class="r" textLength="79.2" lengthAdjust="spacingAndGlyphs">37684976</text>
<text x="303.3" y="941" class="r" textLength="160.4" lengthAdjust="spacingAndGlyphs">2019.12.03 05:08:33</text>
<text x="566.6" y="941" class="r" textLength="24" lengthAdjust="spacingAndGlyphs">sell</text>
<text x="659.2" y="941" class="r" textLength="33.5" lengthAdjust="spacingAndGlyphs">0.31</text>
<text x="767.3" y="941" class="r" textLength="52.7" lengthAdjust="spacingAndGlyphs">usdjpy</text>
<text x="883.7" y="941" class="r" textLength="63.3" lengthAdjust="spacingAndGlyphs">109.158</text>
<text x="1010.6" y="941" class="r" textLength="63.3" lengthAdjust="spacingAndGlyphs">114.625</text>
<text x="1137.5" y="941" class="r" textLength="63.3" lengthAdjust="spacingAndGlyphs">105.205</text>
<text x="1320" y="941" class="r" textLength="160.4" lengthAdjust="spacingAndGlyphs">2019.12.19 06:03:44</text>
<text x="1544.5" y="941" class="r" textLength="63.3" lengthAdjust="spacingAndGlyphs">109.576</text>
<text x="1684.5" y="941" class="r" textLength="49.8" lengthAdjust="spacingAndGlyphs">-40.01</text>
<text x="1821.6" y="941" class="r" textLength="60" lengthAdjust="spacingAndGlyphs">-118.26</text>
<!-- terminal tabs -->
<rect x="24" y="949" width="1894" height="31" fill="#f0f0f0"/>
<path d="M24 948.5H1914" stroke="#000" fill="none"/>
<path d="M134.5 952V976M496.5 952V976M587.5 952V976M688.5 952V976M779.5 952V976M878.5 952V976M961.5 952V976M1085.5 952V976M1193.5 952V976M1287.5 952V976" stroke="#777" fill="none"/>
<rect x="225.5" y="948.5" width="149" height="29" fill="#fff" stroke="#000"/>
<text x="42.4" y="970" class="g" textLength="76.4" lengthAdjust="spacingAndGlyphs">Торговля</text>
<text x="149.4" y="970" class="g" textLength="60.4" lengthAdjust="spacingAndGlyphs">Активы</text>
<text x="240.8" y="970" class="k" textLength="118.8" lengthAdjust="spacingAndGlyphs">История Счета</text>
<text x="390.6" y="970" class="g" textLength="69.4" lengthAdjust="spacingAndGlyphs">Новости</text>
<text x="463.3" y="974" style="font-size:15px;font-weight:bold;fill:#e8101c" textLength="17.1" lengthAdjust="spacingAndGlyphs">99</text>
<text x="511.4" y="970" class="g" textLength="60" lengthAdjust="spacingAndGlyphs">Алерты</text>
<text x="601" y="970" class="g" textLength="50" lengthAdjust="spacingAndGlyphs">Почта</text>
<text x="655.5" y="974" style="font-size:15px;font-weight:bold;fill:#e8101c" textLength="16.3" lengthAdjust="spacingAndGlyphs">29</text>
<text x="703.7" y="970" class="g" textLength="60" lengthAdjust="spacingAndGlyphs">Маркет</text>
<text x="794.3" y="970" class="g" textLength="68.1" lengthAdjust="spacingAndGlyphs">Сигналы</text>
<text x="893.5" y="970" class="g" textLength="51.8" lengthAdjust="spacingAndGlyphs">Статьи</text>
<text x="976.7" y="970" class="g" textLength="92.7" lengthAdjust="spacingAndGlyphs">Библиотека</text>
<text x="1100.4" y="970" class="g" textLength="77.2" lengthAdjust="spacingAndGlyphs">Эксперты</text>
<text x="1208.2" y="970" class="g" textLength="63.6" lengthAdjust="spacingAndGlyphs">Журнал</text>
<!-- status bar -->
<rect y="981" width="1920" height="4" fill="#f8f8f8"/>
<rect y="985" width="1920" height="1.5" fill="#a8a8a8"/>
<path d="M858.5 990V1018M1034.5 990V1018M1195.5 990V1018M1305.5 990V1018M1414.5 990V1018M1518.5 990V1018M1625.5 990V1018M1728.5 990V1018" stroke="#999" fill="none"/>
<text x="2.4" y="1011.7" class="k" style="fill:#222" textLength="266.2" lengthAdjust="spacingAndGlyphs">Для вызова справки нажмите F1</text>
<text x="865.3" y="1011.7" class="k" style="fill:#222" textLength="55.5" lengthAdjust="spacingAndGlyphs">Default</text>
<text x="1040" y="1011.7" class="k" style="fill:#222" textLength="136.3" lengthAdjust="spacingAndGlyphs">2019.09.05 00:00</text>
<text x="1201.2" y="1011.7" class="k" style="fill:#222" textLength="86.1" lengthAdjust="spacingAndGlyphs">O: 2937.89</text>
<text x="1311.8" y="1011.7" class="k" style="fill:#222" textLength="84.5" lengthAdjust="spacingAndGlyphs">H: 2986.39</text>
<text x="1420.4" y="1011.7" class="k" style="fill:#222" textLength="80" lengthAdjust="spacingAndGlyphs">L: 2936.39</text>
<text x="1524" y="1011.7" class="k" style="fill:#222" textLength="83.3" lengthAdjust="spacingAndGlyphs">C: 2969.64</text>
<text x="1631" y="1011.7" class="k" style="fill:#222" textLength="69.4" lengthAdjust="spacingAndGlyphs">V: 65248</text>
<text x="1779.6" y="1011.7" class="k" style="fill:#222" textLength="70.6" lengthAdjust="spacingAndGlyphs">379/3 kb</text>
<g fill="none" stroke-width="3">
<path stroke="#5f7f00" d="M1735.5 994V1008M1739.5 994V1008M1743.5 994V1006M1747.5 994V1006M1751.5 994V1004M1755.5 994V1002M1759.5 994V1000M1763.5 994V998M1767.5 994V996M1771.5 994V995"/>
<path stroke="#003a5e" d="M1735.5 1010V1014M1739.5 1010V1014M1743.5 1008V1014M1747.5 1008V1014M1751.5 1006V1014M1755.5 1004V1014M1759.5 1002V1014M1763.5 1000V1014M1767.5 998V1014M1771.5 997V1014"/>
</g>
</svg>
</body></html>
